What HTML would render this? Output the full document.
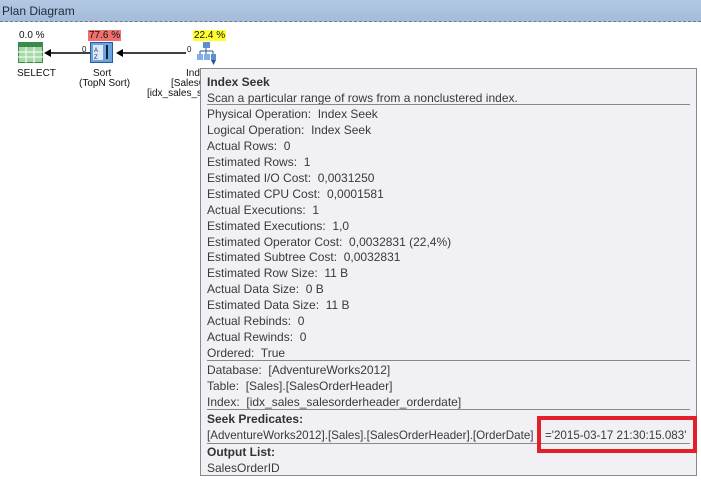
<!DOCTYPE html>
<html><head><meta charset="utf-8"><style>
*{margin:0;padding:0;box-sizing:border-box}
body{width:701px;height:482px;background:#fff;font-family:"Liberation Sans",sans-serif;position:relative;overflow:hidden;color:#222}
.hdr{position:absolute;left:0;top:0;width:701px;height:22px;background:linear-gradient(#b3c8e2,#a5bcd9);font-size:12px;line-height:22px;padding-left:2px;color:#1e2a3a;border-bottom:1px dashed #6d7a8c}
.t{position:absolute;font-size:10px;white-space:nowrap;color:#111}
.tip{position:absolute;left:200px;top:68px;width:497px;height:408px;background:#f0f0f5;border:1px solid #8a8a8a}
.l{position:absolute;left:6px;font-size:12px;white-space:nowrap;color:#3a3a3a;line-height:14px}
.sep{position:absolute;left:6px;right:6px;height:1px;background:#888}
</style></head><body>
<div class="hdr">Plan Diagram</div>
<div class="t" style="left:19px;top:30px">0.0 %</div>
<svg style="position:absolute;left:18px;top:42px" width="26" height="22"><rect x="0.5" y="0.5" width="24" height="20" fill="#a8d8a8" stroke="#3c8a4a"/><rect x="1" y="1" width="24" height="4" fill="#3c8a4a"/><g stroke="#fff" stroke-width="1"><line x1="0" y1="10" x2="25" y2="10"/><line x1="0" y1="15" x2="25" y2="15"/><line x1="8" y1="5" x2="8" y2="21"/><line x1="16" y1="5" x2="16" y2="21"/></g></svg>
<div class="t" style="left:17px;top:68px">SELECT</div>
<svg style="position:absolute;left:44px;top:48px" width="50" height="10"><line x1="4" y1="5" x2="48" y2="5" stroke="#000" stroke-width="1.5"/><polygon points="0,5 7,1 7,9" fill="#000"/></svg>
<div class="t" style="left:82px;top:45px;font-size:8px">0</div>
<div class="t" style="left:88px;top:30px;background:#f07070;padding:0 1px">77.6 %</div>
<svg style="position:absolute;left:90px;top:42px" width="24" height="22"><rect x="0.5" y="0.5" width="22" height="20" fill="#6aa4e0" stroke="#2a5a9a"/><rect x="3" y="3" width="10" height="15" fill="#dce9f7"/><text x="4" y="10" font-size="6" fill="#225">A</text><text x="4" y="17" font-size="6" fill="#225">Z</text><line x1="17" y1="3" x2="17" y2="17" stroke="#123" stroke-width="2"/></svg>
<div class="t" style="left:93px;top:68px">Sort</div>
<div class="t" style="left:79px;top:78px">(TopN Sort)</div>
<svg style="position:absolute;left:116px;top:48px" width="70" height="10"><line x1="4" y1="5" x2="70" y2="5" stroke="#000" stroke-width="1.5"/><polygon points="0,5 7,1 7,9" fill="#000"/></svg>
<div class="t" style="left:187px;top:45px;font-size:8px">0</div>
<div class="t" style="left:193px;top:30px;background:#ffff30;padding:0 1px">22.4 %</div>
<svg style="position:absolute;left:196px;top:41px" width="22" height="25"><rect x="7" y="1" width="7" height="6" fill="#5a8fd0"/><path d="M10 7V10M4 10H17M4 10V13M10 10V13M17 10V13" stroke="#2a5a9a" fill="none"/><rect x="1" y="13" width="6" height="6" fill="#7fb0e8"/><rect x="8" y="13" width="6" height="6" fill="#7fb0e8"/><rect x="15" y="13" width="5" height="6" fill="#5a8fd0"/><polygon points="15,19 20,19 17.5,24" fill="#2a4fa0"/></svg>
<div class="t" style="left:186px;top:68px">Inde</div>
<div class="t" style="left:171px;top:78px">[SalesOr</div>
<div class="t" style="left:147px;top:88px">[idx_sales_sa</div>
<div class="tip">
<div class="l" style="top:6px;font-weight:bold;color:#333">Index Seek</div>
<div class="l" style="top:22px">Scan a particular range of rows from a nonclustered index.</div>
<div class="sep" style="top:35px"></div>
<div class="l" style="top:38px">Physical Operation:&nbsp; Index Seek</div>
<div class="l" style="top:54px">Logical Operation:&nbsp; Index Seek</div>
<div class="l" style="top:70px">Actual Rows:&nbsp; 0</div>
<div class="l" style="top:86px">Estimated Rows:&nbsp; 1</div>
<div class="l" style="top:102px">Estimated I/O Cost:&nbsp; 0,0031250</div>
<div class="l" style="top:118px">Estimated CPU Cost:&nbsp; 0,0001581</div>
<div class="l" style="top:134px">Actual Executions:&nbsp; 1</div>
<div class="l" style="top:150px">Estimated Executions:&nbsp; 1,0</div>
<div class="l" style="top:166px">Estimated Operator Cost:&nbsp; 0,0032831 (22,4%)</div>
<div class="l" style="top:181px">Estimated Subtree Cost:&nbsp; 0,0032831</div>
<div class="l" style="top:197px">Estimated Row Size:&nbsp; 11 B</div>
<div class="l" style="top:213px">Actual Data Size:&nbsp; 0 B</div>
<div class="l" style="top:229px">Estimated Data Size:&nbsp; 11 B</div>
<div class="l" style="top:245px">Actual Rebinds:&nbsp; 0</div>
<div class="l" style="top:261px">Actual Rewinds:&nbsp; 0</div>
<div class="l" style="top:277px">Ordered:&nbsp; True</div>
<div class="sep" style="top:291px"></div>
<div class="l" style="top:294px">Database:&nbsp; [AdventureWorks2012]</div>
<div class="l" style="top:310px">Table:&nbsp; [Sales].[SalesOrderHeader]</div>
<div class="l" style="top:326px">Index:&nbsp; [idx_sales_salesorderheader_orderdate]</div>
<div class="sep" style="top:340px"></div>
<div class="l" style="top:343px;font-weight:bold;color:#333">Seek Predicates:</div>
<div class="l" style="top:360px;font-size:11.6px">[AdventureWorks2012].[Sales].[SalesOrderHeader].[OrderDate]</div>
<div class="l" style="top:360px;left:344px;font-size:11.6px">='2015-03-17 21:30:15.083'</div>
<div class="sep" style="top:374px"></div>
<div class="l" style="top:376px;font-weight:bold;color:#333">Output List:</div>
<div class="l" style="top:392px">SalesOrderID</div>
</div>
<div style="position:absolute;left:537px;top:416px;width:160px;height:37px;border:4px solid #e3202a"></div>
</body></html>
